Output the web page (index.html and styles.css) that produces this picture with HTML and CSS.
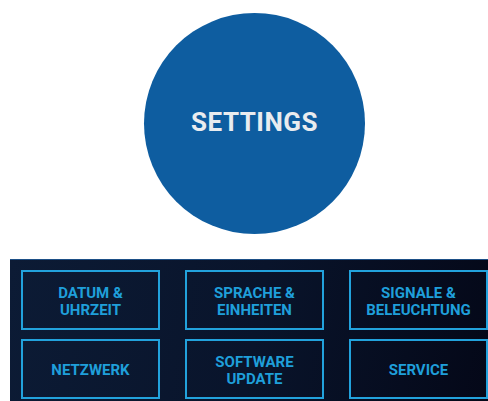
FILE: index.html
```html
<!DOCTYPE html>
<html lang="en">
<head>
  <meta charset="UTF-8" />
  <meta name="viewport" content="width=device-width, initial-scale=1.0"/>
  <title>Settings</title>
  <link rel="stylesheet" href="styles.css">
</head>
<body>
  <div class="hero">
    <div class="circle">SETTINGS</div>
  </div>

  <div class="panel">
    <div class="menu">
      <button type="button">DATUM &amp;<br/>UHRZEIT</button>
      <button type="button">SPRACHE &amp;<br/>EINHEITEN</button>
      <button type="button">SIGNALE &amp;<br/>BELEUCHTUNG</button>
      <button type="button">NETZWERK</button>
      <button type="button">SOFTWARE<br/>UPDATE</button>
      <button type="button">SERVICE</button>
    </div>
  </div>
</body>
</html>
```

FILE: styles.css
```css
body {
  margin: 0;
  background: #ffffff;
  font-family: Roboto, "Liberation Sans", sans-serif;
  overflow: hidden;
}

.hero {
  height: 259px;
  padding-top: 13px;
  box-sizing: border-box;
}

.circle {
  width: 221px;
  height: 221px;
  margin-left: 144px;
  padding-bottom: 4px;
  box-sizing: border-box;
  border-radius: 50%;
  background: #0e5da0;
  color: #e9ecef;
  font-size: 26px;
  font-weight: 700;
  display: flex;
  align-items: center;
  justify-content: center;
  letter-spacing: 0.5px;
}

.panel {
  margin-left: 10px;
  width: 490px;
  height: 150px;
  border-top: 1px solid #1d4f86;
  background: linear-gradient(100deg, #0c1b35 0%, #09142b 50%, #040717 100%);
  padding: 10px 0 0 11px;
  box-sizing: border-box;
}

.menu {
  display: grid;
  grid-template-columns: repeat(3, 139px);
  grid-auto-rows: 60px;
  column-gap: 25px;
  row-gap: 9px;
}

.menu button {
  background: transparent;
  border: 2px solid #22a2dc;
  color: #1f9fda;
  font-family: Roboto, "Liberation Sans", sans-serif;
  font-weight: 700;
  font-size: 15px;
  line-height: 17px;
  padding: 3px 0 0;
  cursor: pointer;
}
```
